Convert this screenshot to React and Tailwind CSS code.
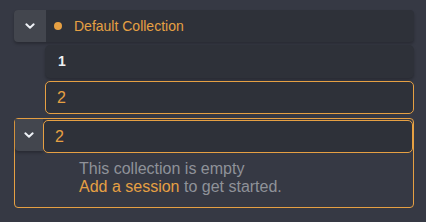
import React from 'react';

function Chevron() {
  return (
    <svg width="16" height="16" viewBox="0 0 24 24" fill="none" stroke="#eef1f6" strokeWidth="3" strokeLinecap="round" strokeLinejoin="round">
      <path d="M6.5 9.5l5.5 5 5.5-5" />
    </svg>
  );
}

export default function App() {
  return (
    <div className="w-[426px] h-[222px] bg-[#363944] pl-[14px] pt-[10px] text-[14px]" style={{ fontFamily: '"Liberation Sans", Arial, sans-serif' }}>
      <div className="w-[400px] flex flex-col">
        {/* collection header */}
        <div className="flex h-[32px] rounded-[4px] bg-[#2e3139] shadow-[0_2px_3px_rgba(0,0,0,0.25)]">
          <div className="w-[32px] flex items-center justify-center bg-[#43464e] rounded-l-[4px]">
            <Chevron />
          </div>
          <div className="flex items-center pl-[8px] gap-[12px]">
            <span className="w-[8px] h-[8px] rounded-full bg-[#e6a043]" />
            <span className="text-[#e6a043]">Default Collection</span>
          </div>
        </div>

        {/* sessions */}
        <div className="ml-[31px] mt-[3px] h-[33px] rounded-[5px] bg-[#2e3139] border border-transparent shadow-[0_2px_3px_rgba(0,0,0,0.25)] flex items-center pl-[12px] text-[#eef0f4] font-bold">
          1
        </div>
        <div className="ml-[31px] mt-[3px] h-[33px] rounded-[5px] bg-[#2e3139] border border-[#e6a043] flex items-center pl-[11px] text-[16px] text-[#e6a043]">
          2
        </div>

        {/* second collection */}
        <div className="mt-[4px] h-[90px] rounded-[4px] border border-[#e6a043] flex flex-col">
          <div className="flex h-[33px]">
            <div className="w-[28px] h-[32px] flex items-center justify-center bg-[#43464e] rounded-bl-[4px] shadow-[0_2px_3px_rgba(0,0,0,0.25)]">
              <Chevron />
            </div>
            <div className="flex-1 mt-px h-[33px] rounded-[5px] bg-[#2e3139] border border-[#e6a043] flex items-center pl-[11px] text-[16px] text-[#e6a043]">
              2
            </div>
          </div>
          <div className="pl-[64px] pt-[8px] text-[16px] leading-[18px] text-[#8f9299]">
            <div>This collection is empty</div>
            <div>
              <span className="text-[#e6a043]">Add a session</span> to get started.
            </div>
          </div>
        </div>
      </div>
    </div>
  );
}
